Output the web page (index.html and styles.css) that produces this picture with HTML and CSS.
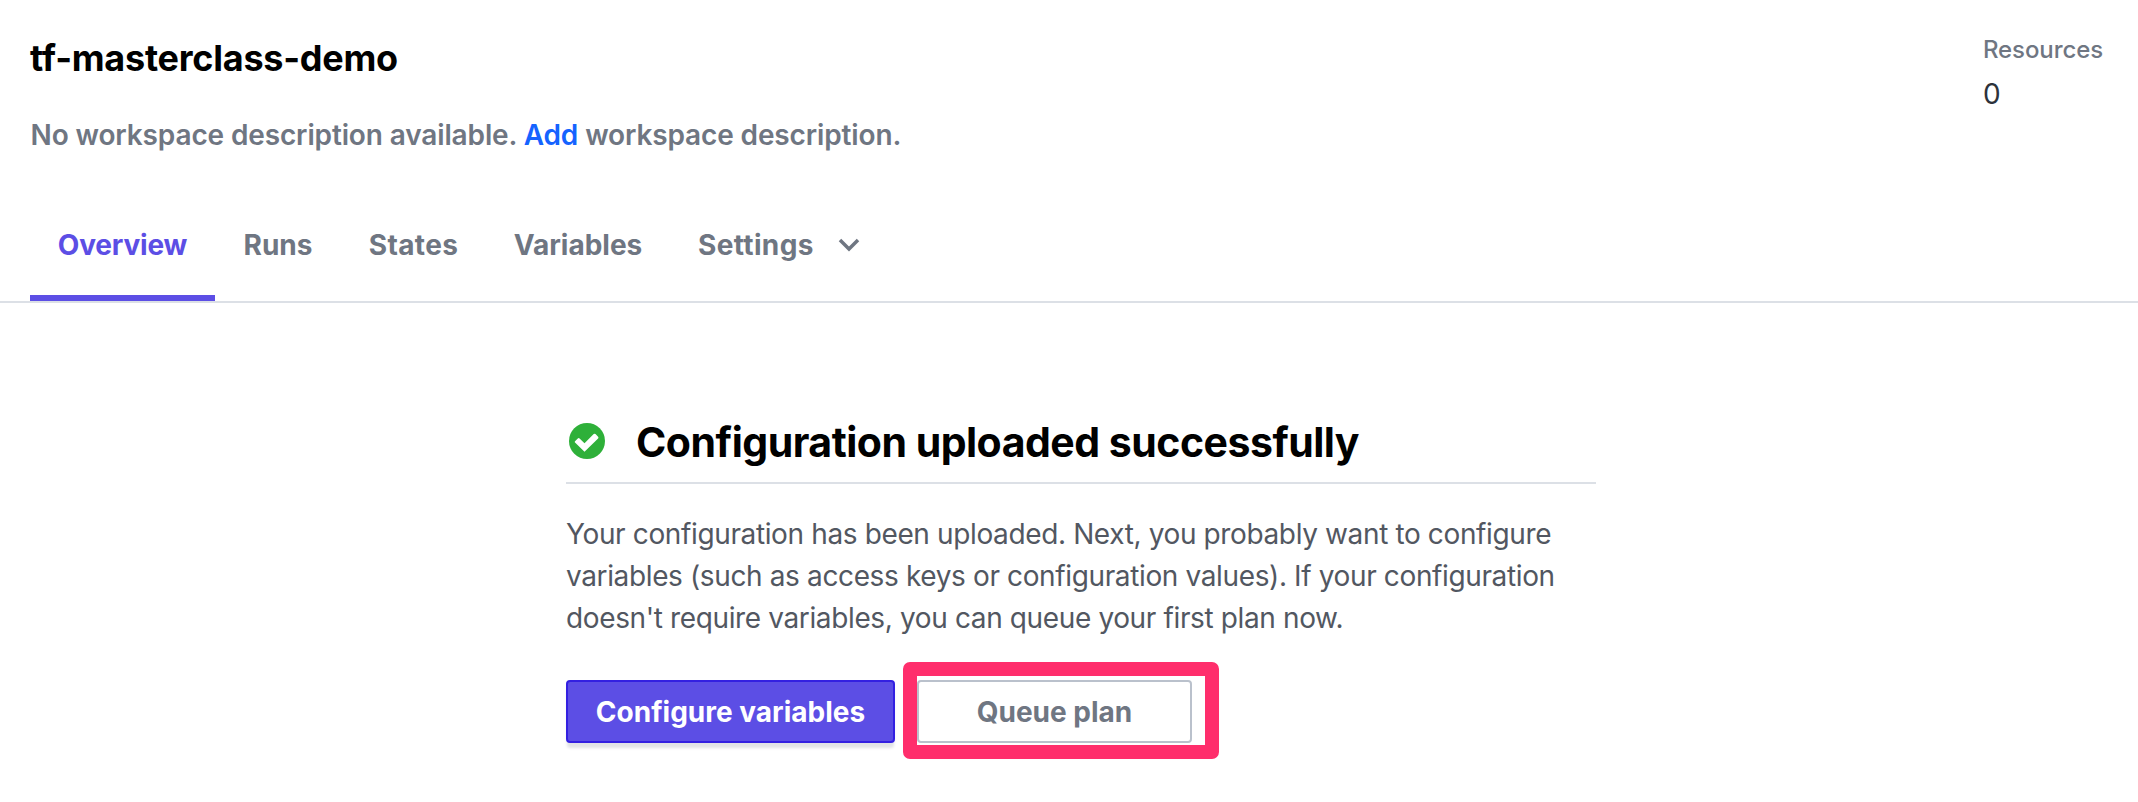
FILE: index.html
```html
<!DOCTYPE html>
<html lang="en">
<head>
<meta charset="utf-8">
<title>tf-masterclass-demo</title>
<link rel="stylesheet" href="styles.css">
</head>
<body>
<header class="header">
  <div class="intro">
    <h1 class="title">tf-masterclass-demo</h1>
    <p class="desc">No workspace description available. <a class="link">Add</a> workspace description.</p>
  </div>
  <dl class="stat">
    <dt class="stat-label">Resources</dt>
    <dd class="stat-value">0</dd>
  </dl>
</header>
<nav class="tabs">
  <a class="tab active">Overview</a>
  <a class="tab runs">Runs</a>
  <a class="tab states">States</a>
  <a class="tab variables">Variables</a>
  <a class="tab settings">Settings<svg class="chevron" width="22" height="14" viewBox="0 0 22 14"><path d="M2 2l9 9 9-9" fill="none" stroke="currentColor" stroke-width="3.5"/></svg></a>
</nav>
<main class="panel">
  <h2 class="heading"><svg class="check" width="36" height="36" viewBox="0 0 36 36"><circle cx="18" cy="18" r="18" fill="#2eb039"/><path d="M6 18.2l2.8-2.8q.9-.8 1.8 0l4.9 4.9 9.2-9.2q.9-.8 1.8 0l2.6 2.6q.8.9 0 1.8L15.5 28.7 6 19.6q-.6-.7 0-1.4z" fill="#fff"/></svg>Configuration uploaded successfully</h2>
  <p class="body">Your configuration has been uploaded. Next, you probably want to configure variables (such as access keys or configuration values). If your configuration doesn't require variables, you can queue your first plan now.</p>
  <div class="actions">
    <button class="btn primary">Configure variables</button>
    <div class="highlighted"><button class="btn secondary">Queue plan</button></div>
  </div>
</main>
</body>
</html>
```

FILE: styles.css
```css
*, *::after { box-sizing: border-box; }
body { margin: 0; height: 802px; overflow: hidden; background: #fff; font-family: Inter, "Liberation Sans", sans-serif; font-size: 28px; color: #6f7682; }
.header { display: flex; justify-content: space-between; height: 204px; padding: 28px 34px 0 30px; }
.title { margin: 0; font-size: 36px; line-height: 60px; font-weight: 700; letter-spacing: -0.24px; color: #000; font-variant-ligatures: none; }
.desc { margin: 26px 0 0; padding-left: 0.5px; line-height: 42px; font-weight: 600; letter-spacing: -0.13px; }
.link { color: #1563ff; }
.stat { margin: 0; width: 121px; }
.stat-label { padding-top: 1px; font-size: 24px; line-height: 42px; font-weight: 500; letter-spacing: -0.1px; }
.stat-value { margin: 2px 0 0; line-height: 42px; color: #2d323b; }
.tabs { display: flex; height: 99px; padding-left: 30px; border-bottom: 2px solid #dce0e6; }
.tab { display: flex; justify-content: center; height: 97px; padding-top: 20px; line-height: 42px; font-weight: 700; }
.active { width: 185px; color: #5c4ee5; border-bottom: 6px solid #5c4ee5; letter-spacing: -0.2px; }
.runs { width: 126px; }
.states { width: 145px; letter-spacing: 0.35px; }
.variables { width: 184px; }
.settings { padding-left: 28px; letter-spacing: 0.35px; }
.chevron { margin: 14px 0 0 24px; }
.panel { width: 1030px; margin: 113px 0 0 566px; }
.heading { display: flex; height: 68px; margin: 0; border-bottom: 2px solid #dce0e6; font-size: 41px; line-height: 52px; font-weight: 700; letter-spacing: -0.5px; color: #000; }
.check { margin: 7px 31px 0 3px; }
.body { margin: 29px 0 0; line-height: 42px; color: #525761; letter-spacing: -0.37px; }
.actions { display: flex; margin-top: 41px; gap: 22px; }
.btn { height: 63px; border: 2px solid #bac1cc; border-radius: 4px; padding: 2px 0 0; font: 700 28px/57px Inter, sans-serif; color: #6f7682; background: #fff; }
.primary { width: 329px; color: #fff; background: #5c4ee5; border-color: #3320e1; box-shadow: 0 6px 3px -1px #e1e3e6; }
.secondary { width: 275px; }
.highlighted { position: relative; }
.highlighted::after { content: ""; position: absolute; left: -14px; top: -18px; width: 316px; height: 97px; border: 14px solid #ff2e6c; border-radius: 7px; }
```
